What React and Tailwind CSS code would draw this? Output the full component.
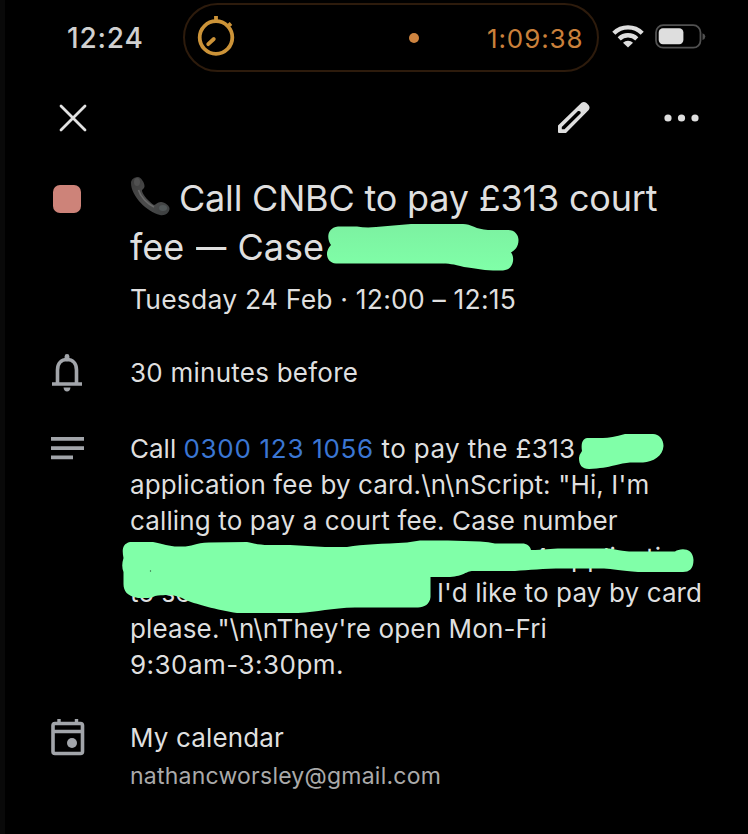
const Line = ({ className = "", children }) => (
  <div className={"w-max shrink-0 whitespace-pre " + className}>{children}</div>
);

const Stopwatch = () => (
  <svg className="-mt-[3px]" width="42" height="44" viewBox="0 0 42 44" fill="none" stroke="#cc9338" strokeLinecap="round">
    <circle cx="21" cy="23.5" r="16.3" strokeWidth="3.8" />
    <path d="M21 6V2M32.5 12.5L36 9.5" strokeWidth="3.8" strokeLinecap="butt" />
    <path d="M13.2 30.2L18.8 25" strokeWidth="3.8" />
  </svg>
);

const Wifi = () => (
  <svg width="32" height="24" viewBox="0 0 32 24" fill="none" stroke="#dedede" strokeWidth="4.4">
    <path d="M1.8 9.2A20.3 20.3 0 0 1 30.2 9.2" />
    <path d="M7.2 14.9A12.6 12.6 0 0 1 24.8 14.9" />
    <path d="M16 23.5L11 18.7A7.2 7.2 0 0 1 21 18.7Z" fill="#dedede" stroke="none" />
  </svg>
);

const Battery = () => (
  <svg width="52" height="26" viewBox="0 0 52 26">
    <rect x="1" y="1.2" width="44.5" height="22.5" rx="7.2" fill="none" stroke="#515151" strokeWidth="1.8" />
    <rect x="3.7" y="4.2" width="24.7" height="16" rx="4.2" fill="#dedede" />
    <path d="M47.5 9.2Q50.3 10.2 50.3 12.6T47.5 16Z" fill="#515151" />
  </svg>
);

const Phone = () => (
  <svg className="mt-[2px]" width="42" height="42" viewBox="0 0 42 42">
    <defs>
      <linearGradient id="handset" x1="0" y1="0" x2="1" y2="1">
        <stop offset="0" stopColor="#3a3a3a" />
        <stop offset="0.5" stopColor="#4c4c4c" />
        <stop offset="1" stopColor="#3c3f40" />
      </linearGradient>
    </defs>
    <path d="M1 7C1 3 5 1 8 1C11 1 14.500 7 14.500 10C14.500 13 12 13 12 15C13 19 19 26 24 29C26 29 27 26 31 26C35 26 40 30 39.500 33C39 37 35 40 30 39C17 36 1 20 1 7Z" fill="url(#handset)" />
    <path d="M8.500 14C10.500 21 17.500 28 24 31" fill="none" stroke="#696969" strokeWidth="1.6" />
    <ellipse cx="7" cy="6" rx="3" ry="4" fill="#505050" />
    <ellipse cx="33" cy="32" rx="4" ry="3" fill="#515758" />
  </svg>
);

const Redactions = () => (
  <svg className="pointer-events-none absolute left-0 top-0" width="748" height="834" viewBox="0 0 748 834">
    <defs>
      <linearGradient id="marker" x1="0" y1="0" x2="0" y2="1">
        <stop offset="0" stopColor="#7cf1a1" />
        <stop offset="1" stopColor="#80ffa8" />
      </linearGradient>
    </defs>
    <path d="M338 226.500H357Q366 228 376 227L411 224H463C471 224 476 229.500 488 230H508C515 230 518.500 235 518.500 240C518.500 247 515 250 511 252.500C515 257 514 270 503 270.500H493C481 270 475 268 464 267C453 264 449 263.500 440 263.500H336C330 263 327 259 327 254Q327 249 331 245C327 240 326 228 338 226.500Z" fill="url(#marker)" />
    <path d="M587 438H603Q611 438 625 434H653C659 434 663.500 439 663.500 446C663 456 653 462 643 462.500H630C620 463 611 468 589 469C582 469 579 465 579 458Q579 455 582 451C581 444 582 439 587 438Z" fill="#80ffa8" />
    <path d="M130 542H153C164 544 170 547 180 546.500C192 547 194 543 209 542.500L247 542C256 544 260 545 269 545H290L325 547H347C363 544 383 544 407 542.500L420 540.500H448L480 541.500Q489 542 495 543.500H522C527 543.500 530 546 531 550C544 550 550 548.500 562 548.500H606C615 548.500 616 551 632 551.500H675C680 548 693 547 693.500 560C693.500 569 689 572 683 572H638C622 571 612 569 604 568.500H563C543 568.500 529 570 515 571H473C466 571 464 576 450 577H430.500V597C430 604 424 607.500 418 607.500H355C331 608 318 612 298 613H237C218 610 194 604 184 599C173 594 168 595 158 595.500C153 596 154 598 145 598H138C127 596 123.500 591 123.500 584V572Q121 566 123.500 558C122 550 122 544 130 542Z" fill="#80ffa8" />
    <circle cx="150.500" cy="571" r="0.700" fill="#35633f" />
  </svg>
);

export default function App() {
  return (
    <div className="relative flex h-[834px] w-[748px] flex-col overflow-hidden border-l-[5px] border-[#090909] bg-black font-['Inter','Liberation_Sans',sans-serif] text-[#dfdfdf]">
      <header className="flex h-[73px] shrink-0 items-start pt-[3px]">
        <div className="w-[178px] pl-[62px] pt-[17px] text-[28px] font-medium leading-[36px] tracking-[0.8px] text-[#d0d0d0]"><Line>12:24</Line></div>
        <div className="flex h-[69px] w-[416px] items-center rounded-full border-2 border-[#2d1b0c] pl-[10px]">
          <Stopwatch />
          <span className="ml-[172px] h-[10px] w-[10px] rounded-full bg-[#ce8440]" />
          <div className="ml-[68px] pt-[2px] text-[26px] leading-[36px] tracking-[0.9px] text-[#ca803b]"><Line>1:09:38</Line></div>
        </div>
        <div className="flex items-start gap-[11px] pl-[13px] pt-[21px]">
          <Wifi />
          <Battery />
        </div>
      </header>
      <nav className="flex h-[91px] shrink-0 items-center pb-[2px] pl-[54px]">
        <svg width="28" height="28" viewBox="0 0 28 28" stroke="#e2e2e2" strokeWidth="2.8" strokeLinecap="round"><path d="M2 2L26 26M26 2L2 26" /></svg>
        <svg className="ml-[470px]" width="34" height="34" viewBox="0 0 34 34"><path fillRule="evenodd" fill="#dedede" d="M1 24.500L24.500 1.800Q27 .300 29.500 2L31.500 4Q33.500 6.500 31.700 9L9 32H2Q1 32 1 31ZM4.800 26V28.200H7.500L23.500 12.500Q24.500 9.500 21 10Z" /></svg>
        <svg className="ml-[73px]" width="36" height="10" viewBox="0 0 36 10" fill="#dedede"><circle cx="4" cy="5" r="3.600" /><circle cx="17.500" cy="5" r="3.600" /><circle cx="31" cy="5" r="3.600" /></svg>
      </nav>
      <main className="flex flex-col">
        <section className="flex h-[189px] pl-[48px]">
          <div className="mt-[21px] h-[28px] w-[28px] rounded-[7px] bg-[#cd8379]" />
          <div className="ml-[49px] pt-[10px]">
            <h1 className="text-[36px] leading-[49px]">
              <div className="flex gap-[7px]"><Phone /><Line className="tracking-[-0.2px]">Call CNBC to pay £313 court</Line></div>
              <Line>fee <span className="ml-[2px] inline-block w-[31px] origin-left scale-x-[0.84]">—</span> Case</Line>
            </h1>
            <div className="pt-[9px] text-[26.500px] leading-[36px] tracking-[0.2px]"><Line>Tuesday 24 Feb · 12:00 – 12:15</Line></div>
          </div>
        </section>
        <section className="flex h-[78px] pl-[45px]">
          <svg className="mt-[1px]" width="34" height="38" viewBox="0 0 34 38" fill="none" stroke="#a2a5aa" strokeWidth="3.600"><path d="M2 30H32M7.500 30V16C7.500 9 11.500 5.500 17 5.500S26.500 9 26.500 16V30" /><path d="M17 2.500V5" strokeWidth="4.800" strokeLinecap="round" /><path d="M13.500 33.500H20.500Q20 37.500 17 37.500T13.500 33.500Z" fill="#a2a5aa" stroke="none" /></svg>
          <div className="ml-[46px] pt-[2px] text-[26px] leading-[36px] tracking-[0.24px]"><Line>30 minutes before</Line></div>
        </section>
        <section className="flex h-[287px] pl-[46px]">
          <svg className="mt-[6px]" width="33" height="24" viewBox="0 0 33 24" fill="#a2a5aa"><path d="M0 0H33V3.800H0ZM0 9.200H33V13H0ZM0 18.400H22V22.200H0Z" /></svg>
          <div className="ml-[46px] text-[26px] leading-[36px] tracking-[0.13px]">
            <Line className="tracking-[0.37px]"><span className="tracking-[0px]">Call </span><span className="tracking-[0.7px] text-[#3b76d3]">0300 123 1056</span> to pay the £313</Line>
            <Line>{'application fee by card.\\n\\nScript: "Hi, I\'m'}</Line>
            <Line>calling to pay a court fee. Case number</Line>
            <div className="h-[36px] pt-px"><Line className="pl-[402px]">4 application</Line></div>
            <div className="flex"><div className="w-[307px] shrink-0"><Line>to se</Line></div><Line>I'd like to pay by card</Line></div>
            <Line>{'please."\\n\\nThey\'re open Mon-Fri'}</Line>
            <Line className="tracking-[0.48px]">9:30am-3:30pm.</Line>
          </div>
        </section>
        <section className="flex pl-[46px]">
          <svg width="34" height="38" viewBox="0 0 34 38" fill="none" stroke="#a2a5aa"><rect x="2" y="5.500" width="29.500" height="30" rx="2" strokeWidth="3.600" /><path d="M2 13.500H31M8 1V5M25.500 1V5" strokeWidth="3.400" /><circle cx="21" cy="25" r="5" fill="#a2a5aa" stroke="none" /></svg>
          <div className="ml-[45px] pt-[2px] text-[26px] leading-[36px] tracking-[0.14px]">
            <Line>My calendar</Line>
            <div className="pt-[4px] text-[23px] leading-[32px] tracking-[0.23px] text-[#aaa]"><Line>nathancworsley@gmail.com</Line></div>
          </div>
        </section>
      </main>
      <div className="absolute -left-[5px] top-0"><Redactions /></div>
    </div>
  );
}
